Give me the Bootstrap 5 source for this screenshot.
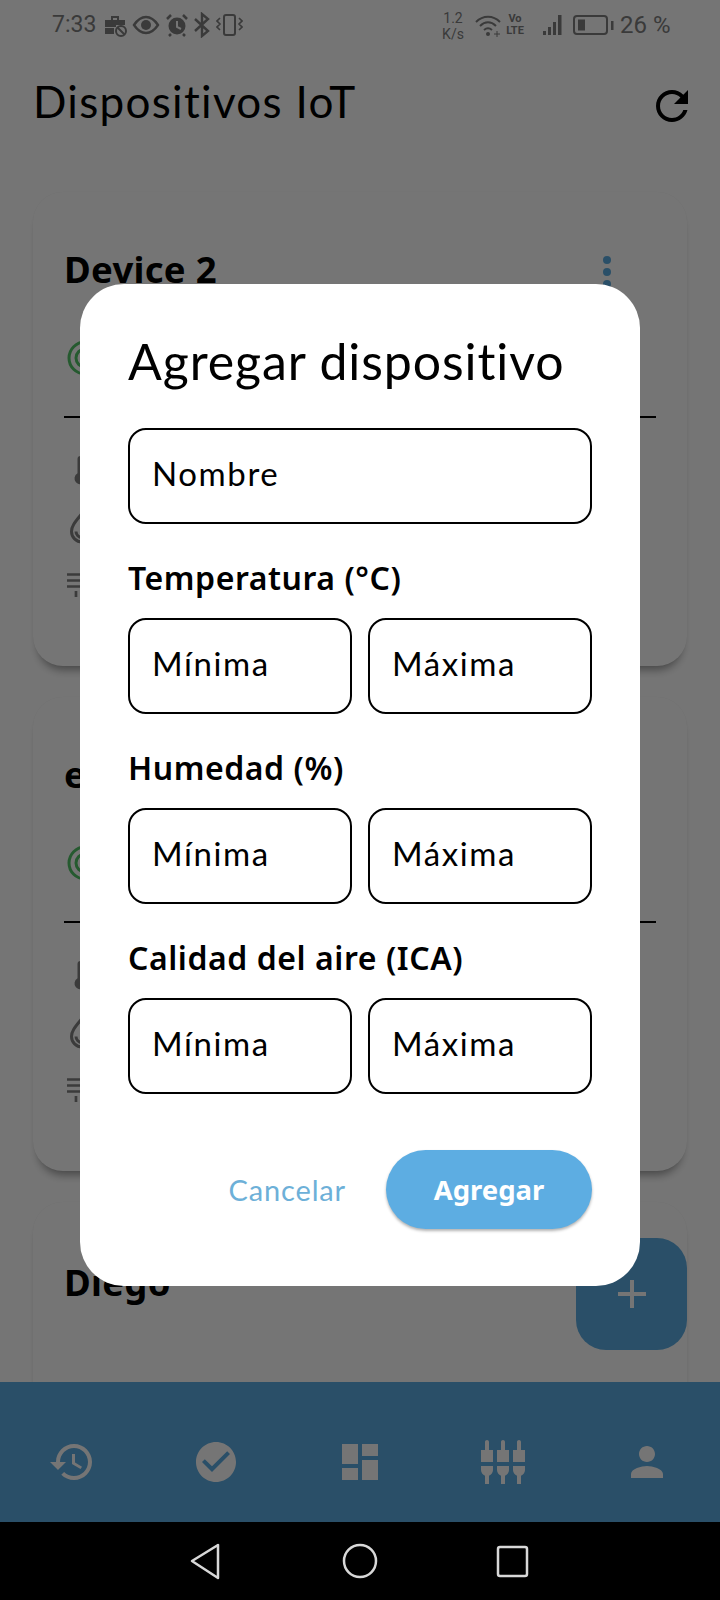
<!doctype html>
<html lang="es"><head><meta charset="utf-8">
<link href="https://cdn.jsdelivr.net/npm/bootstrap@5.3.0/dist/css/bootstrap.min.css" rel="stylesheet">
<style>
html,body{margin:0;background:#000}
body{width:720px;height:1600px;overflow:hidden;font-family:"Lato","Noto Sans",sans-serif;color:#000}
.phone{width:720px;height:1600px}
.app{height:1522px;background:#fff;overflow:hidden}
.scrim{background:rgba(0,0,0,.54);z-index:5}
.sbar{height:50px;padding:0 50px 0 52px;color:#7e7e7e;font-size:23px;font-family:"Roboto",sans-serif}
.sbar svg{display:block;flex:none}
.sb-time{width:46px}
.sb-a{margin-left:5px}
.sb-b{margin-left:4px}
.netspeed{font-size:14px;line-height:16px;text-align:center;width:24px;margin-left:auto;margin-top:2px}
.sb-wifi{margin-left:10px}
.sb-vo{font-size:11px;line-height:12px;font-weight:700;margin-left:4px;width:20px;text-align:center}
.sb-sig{margin-left:18px}
.sb-bat{margin-left:8px}
.sb-pct{margin-left:6px;font-size:24px;width:50px;white-space:nowrap}
.apphead{height:90px;padding:12px 24px 0 33px}
.apphead h1{font-size:44px;font-weight:400;margin:0;letter-spacing:1.3px}
.apphead svg{margin-top:10px}
.devlist{padding:52px 33px 0;gap:31px}
.devcard{height:474px;background:#fff;border-radius:30px;padding:55px 31px 0;box-shadow:0 9px 8px -5px rgba(0,0,0,.38),0 0 1px rgba(0,0,0,.08)}
.devcard-last{padding-top:58px}
.devname{font-family:"Noto Sans",sans-serif;font-size:36.5px;font-weight:700;letter-spacing:.3px;line-height:44px;margin:0}
.kebab{width:8px;gap:4px;margin:6px 45px 0 0}
.kebab i{display:block;width:8px;height:8px;border-radius:50%;background:#5dade2}
.devstat{margin:37px 0 0 3px;padding-top:12px;height:28px;box-sizing:content-box}
.devline{border:0;border-top:2px solid #000;opacity:1;margin:48px 0 0}
.metric{height:56px}
.metric-first{margin-top:35px}
.metric-list{margin-top:2px}
.metric svg{display:block}
.fabbtn{right:33px;top:1238px;width:111px;height:112px;border-radius:30px;background:#5dade2;z-index:2}
.tabbar{height:140px;left:0;right:0;top:1382px;background:#5dade2;padding:20px 49px 0 48px}
.tabbar svg{fill:#fff}
.andbar{height:78px;background:#000}
.dlg{left:80px;top:284px;width:560px;height:1002px;background:#fff;border-radius:44px;padding:0 48px;z-index:10}
.dlg h2{font-size:50px;font-weight:400;margin:0;padding-top:46px;line-height:62px;height:144px;letter-spacing:.9px}
.dlg .form-control{height:96px;border:2px solid #000;border-radius:18px;font-size:33px;letter-spacing:1.6px;padding:0 22px 6px;color:#000;box-shadow:none;font-family:inherit;min-width:0}
.dlg .form-control::placeholder{color:#000;opacity:1}
.grp{font-family:"Noto Sans",sans-serif;font-size:32px;font-weight:600;letter-spacing:.55px;height:94px;margin:0;padding-top:32px;line-height:44px}
.dlgrow{gap:16px}
.dlgact{margin-top:56px;gap:40px}
.btn-cancel{color:#6db0d8;font-size:29px;letter-spacing:.85px;padding:0;background:none;border:0}
.btn-add{background:#5dade2;color:#fff;font-family:"Noto Sans",sans-serif;font-weight:700;font-size:27.5px;width:206px;height:79px;border:0;border-radius:40px;box-shadow:0 2px 3px rgba(0,0,0,.3)}
.btn-add:hover{background:#5dade2;color:#fff}
</style></head>
<body>
<div class="phone d-flex flex-column">
 <div class="app position-relative">
  <div class="sbar d-flex align-items-center">
   <span class="sb-time">7:33</span>
   <svg class="sb-a" width="24" height="24" viewBox="0 0 24 24" fill="currentColor"><path d="M8 3h8v4h6v5h-9v2H2V7h6zm2 2v2h4V5zM2 15h9v6H2z"/><circle cx="18" cy="18" r="5" fill="none" stroke="currentColor" stroke-width="2"/><path d="M14.500 14.500l7 7" stroke="currentColor" stroke-width="2"/></svg>
   <svg class="sb-a" width="28" height="24" viewBox="0 0 28 24" fill="currentColor"><path d="M2 12C6 6 10 4 14 4s8 2 12 8c-4 6-8 8-12 8S6 18 2 12z" fill="none" stroke="currentColor" stroke-width="2.400"/><circle cx="14" cy="12" r="5"/></svg>
   <svg class="sb-a" width="24" height="24" viewBox="0 0 24 24" fill="currentColor"><circle cx="12" cy="13" r="8.500"/><path d="M12 8v6l4 2" stroke="#fff" stroke-width="2" fill="none"/><path d="M2 6l4-4M22 6l-4-4M6 21l-2 2M18 21l2 2" stroke="currentColor" stroke-width="2.500"/></svg>
   <svg class="sb-b" width="18" height="26" viewBox="0 0 18 26"><path d="M2 7l13 12-6 5V2l6 5L2 19" fill="none" stroke="currentColor" stroke-width="2.400"/></svg>
   <svg class="sb-a" width="27" height="24" viewBox="0 0 27 24"><rect x="8" y="2" width="11" height="20" rx="2" fill="none" stroke="currentColor" stroke-width="2"/><path d="M4 5L1 8l3 3-3 3 3 3M23 5l3 3-3 3 3 3-3 3" fill="none" stroke="currentColor" stroke-width="1.600"/></svg>
   <div class="netspeed">1.2<br>K/s</div>
   <svg class="sb-wifi" width="26" height="24" viewBox="0 0 26 24" fill="currentColor"><path d="M1 9c7-7 17-7 24 0M5 13c5-5 11-5 16 0M9 17c3-2.500 5-2.500 8 0" fill="none" stroke="currentColor" stroke-width="2"/><circle cx="13" cy="21" r="2"/><path d="M19 21h6M22 18v6" stroke="currentColor" stroke-width="1"/></svg>
   <div class="sb-vo">Vo<br>LTE</div>
   <svg class="sb-sig" width="22" height="24" viewBox="0 0 22 24" fill="currentColor"><rect x="0" y="18" width="3" height="4"/><rect x="5" y="14" width="3" height="8"/><rect x="10" y="9" width="3" height="13"/><rect x="15" y="2" width="3.500" height="20"/></svg>
   <svg class="sb-bat" width="41" height="24" viewBox="0 0 41 24" fill="currentColor"><rect x="1" y="3" width="33" height="18" rx="3" fill="none" stroke="currentColor" stroke-width="2"/><rect x="5" y="6.500" width="7" height="11"/><rect x="38" y="8" width="2.500" height="9"/></svg>
   <span class="sb-pct">26 %</span>
  </div>
  <div class="apphead d-flex justify-content-between align-items-center">
   <h1>Dispositivos IoT</h1>
   <svg width="48" height="48" viewBox="0 0 24 24"><path d="M17.65 6.35C16.2 4.9 14.21 4 12 4c-4.420 0-7.990 3.580-7.990 8s3.570 8 7.990 8c3.730 0 6.840-2.550 7.730-6h-2.080c-.82 2.330-3.040 4-5.650 4-3.310 0-6-2.690-6-6s2.690-6 6-6c1.660 0 3.140.69 4.220 1.780L13 11h7V4l-2.350 2.350z"/></svg>
  </div>
  <div class="devlist d-flex flex-column">
   <div class="devcard">
    <div class="d-flex justify-content-between align-items-center"><p class="devname">Device 2</p><div class="kebab d-flex flex-column"><i></i><i></i><i></i></div></div>
    <div class="devstat"><svg width="36" height="36" viewBox="0 0 36 36"><circle cx="18" cy="18" r="16" fill="none" stroke="#52c468" stroke-width="3"/><circle cx="18" cy="18" r="9" fill="none" stroke="#52c468" stroke-width="3"/></svg></div>
    <hr class="devline">
    <div class="metric metric-first"><svg width="36" height="36" viewBox="0 0 24 24" fill="#808080"><path d="M13 4a2 2 0 0 0-4 0v9.500a4 4 0 1 0 4 0z"/></svg></div>
    <div class="metric"><svg width="36" height="36" viewBox="0 0 24 24" fill="none" stroke="#808080" stroke-width="2"><path d="M12 3c4 5 7 8 7 12a7 7 0 0 1-14 0c0-4 3-7 7-12z"/><path d="M8 15a4 4 0 0 0 4 4"/></svg></div>
    <div class="metric metric-list"><svg width="36" height="36" viewBox="0 0 24 24" stroke="#808080" stroke-width="1.800"><path d="M2 5h14M2 9h14M2 13h14M8 16v4"/></svg></div>
   </div>
   <div class="devcard">
    <div class="d-flex justify-content-between align-items-center"><p class="devname">e</p></div>
    <div class="devstat"><svg width="36" height="36" viewBox="0 0 36 36"><circle cx="18" cy="18" r="16" fill="none" stroke="#52c468" stroke-width="3"/><circle cx="18" cy="18" r="9" fill="none" stroke="#52c468" stroke-width="3"/></svg></div>
    <hr class="devline">
    <div class="metric metric-first"><svg width="36" height="36" viewBox="0 0 24 24" fill="#808080"><path d="M13 4a2 2 0 0 0-4 0v9.500a4 4 0 1 0 4 0z"/></svg></div>
    <div class="metric"><svg width="36" height="36" viewBox="0 0 24 24" fill="none" stroke="#808080" stroke-width="2"><path d="M12 3c4 5 7 8 7 12a7 7 0 0 1-14 0c0-4 3-7 7-12z"/><path d="M8 15a4 4 0 0 0 4 4"/></svg></div>
    <div class="metric metric-list"><svg width="36" height="36" viewBox="0 0 24 24" stroke="#808080" stroke-width="1.800"><path d="M2 5h14M2 9h14M2 13h14M8 16v4"/></svg></div>
   </div>
   <div class="devcard devcard-last"><p class="devname">Diego</p></div>
  </div>
  <div class="fabbtn position-absolute d-flex align-items-center justify-content-center"><svg width="48" height="48" viewBox="0 0 24 24" fill="#fff"><path d="M19 13h-6v6h-2v-6H5v-2h6V5h2v6h6z"/></svg></div>
  <div class="tabbar position-absolute d-flex justify-content-between align-items-center">
   <svg width="48" height="48" viewBox="0 0 24 24"><path d="M13 3c-4.970 0-9 4.030-9 9H1l3.890 3.890.07.14L9 12H6c0-3.870 3.130-7 7-7s7 3.130 7 7-3.130 7-7 7c-1.930 0-3.680-.79-4.940-2.060l-1.420 1.420C8.270 19.990 10.510 21 13 21c4.970 0 9-4.030 9-9s-4.030-9-9-9zm-1 5v5l4.280 2.540.72-1.210-3.500-2.080V8H12z"/></svg>
   <svg width="48" height="48" viewBox="0 0 24 24"><path d="M12 2C6.480 2 2 6.480 2 12s4.480 10 10 10 10-4.480 10-10S17.520 2 12 2zm-2 15l-5-5 1.410-1.410L10 14.170l7.590-7.590L19 8l-9 9z"/></svg>
   <svg width="48" height="48" viewBox="0 0 24 24"><path d="M3 13h8V3H3v10zm0 8h8v-6H3v6zm10 0h8V11h-8v10zm0-18v6h8V3h-8z"/></svg>
   <svg width="48" height="48" viewBox="0 0 24 24"><path d="M5 2c0-.55-.45-1-1-1s-1 .45-1 1v4H1v6h6V6H5V2zm4 14c0 1.300.84 2.400 2 2.820V23h2v-4.180c1.160-.41 2-1.510 2-2.820v-2H9v2zm-8 0c0 1.300.84 2.400 2 2.820V23h2v-4.180C6.160 18.400 7 17.300 7 16v-2H1v2zM21 6V2c0-.55-.45-1-1-1s-1 .45-1 1v4h-2v6h6V6h-2zm-8-4c0-.55-.45-1-1-1s-1 .45-1 1v4H9v6h6V6h-2V2zm4 14c0 1.300.84 2.400 2 2.820V23h2v-4.180c1.160-.41 2-1.510 2-2.820v-2h-6v2z"/></svg>
   <svg width="48" height="48" viewBox="0 0 24 24"><path d="M12 12c2.210 0 4-1.790 4-4s-1.790-4-4-4-4 1.790-4 4 1.790 4 4 4zm0 2c-2.670 0-8 1.340-8 4v2h16v-2c0-2.660-5.330-4-8-4z"/></svg>
  </div>
  <div class="scrim position-absolute top-0 start-0 w-100 h-100"></div>
  <div class="dlg position-absolute">
   <h2>Agregar dispositivo</h2>
   <input class="form-control" placeholder="Nombre">
   <p class="grp">Temperatura (°C)</p>
   <div class="d-flex dlgrow"><input class="form-control" placeholder="Mínima"><input class="form-control" placeholder="Máxima"></div>
   <p class="grp">Humedad (%)</p>
   <div class="d-flex dlgrow"><input class="form-control" placeholder="Mínima"><input class="form-control" placeholder="Máxima"></div>
   <p class="grp">Calidad del aire (ICA)</p>
   <div class="d-flex dlgrow"><input class="form-control" placeholder="Mínima"><input class="form-control" placeholder="Máxima"></div>
   <div class="d-flex justify-content-end align-items-center dlgact"><button class="btn btn-cancel">Cancelar</button><button class="btn btn-add">Agregar</button></div>
  </div>
 </div>
 <div class="andbar">
  <svg class="d-block" width="720" height="78" viewBox="0 0 720 78" fill="none" stroke="#d8d8d8" stroke-width="2.500" stroke-linejoin="round"><path d="M218 23v33L192 39z"/><circle cx="360" cy="39" r="16"/><rect x="498" y="25" width="29" height="29" rx="2"/></svg>
 </div>
</div>
<script src="https://cdn.jsdelivr.net/npm/bootstrap@5.3.0/dist/js/bootstrap.bundle.min.js"></script>
</body></html>
